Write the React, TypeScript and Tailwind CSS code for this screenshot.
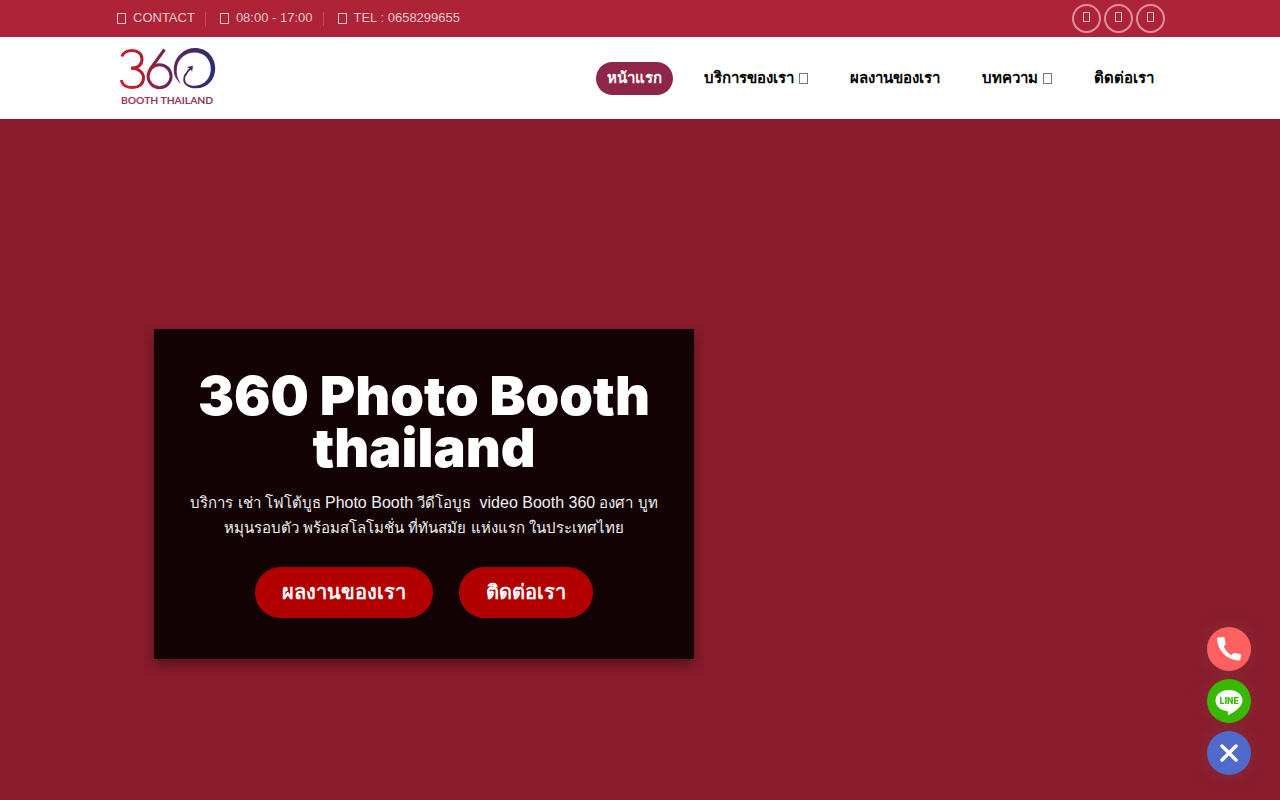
import clsx from 'clsx';

interface NavItem {
  label: string;
  active?: boolean;
  hasMenu?: boolean;
}

const navItems: NavItem[] = [
  { label: 'หน้าแรก', active: true },
  { label: 'บริการของเรา', hasMenu: true },
  { label: 'ผลงานของเรา' },
  { label: 'บทความ', hasMenu: true },
  { label: 'ติดต่อเรา' },
];

const contacts = ['CONTACT', '08:00 - 17:00', 'TEL : 0658299655'];
const socials = ['Facebook', 'Instagram', 'Email'];

function GlyphBox({ className }: { className?: string }) {
  return <span aria-hidden="true" className={clsx('inline-block shrink-0 border', className)} />;
}

function Logo() {
  return (
    <svg width="96" height="60" viewBox="0 0 96 60" role="img" aria-label="360 Booth Thailand">
      <defs>
        <linearGradient id="logo" gradientUnits="userSpaceOnUse" x1="0" y1="0" x2="96" y2="0">
          <stop offset="0" stopColor="#d11f2a" />
          <stop offset="0.2" stopColor="#b3202f" />
          <stop offset="0.5" stopColor="#66265a" />
          <stop offset="1" stopColor="#272e72" />
        </linearGradient>
        <linearGradient id="logoText" gradientUnits="userSpaceOnUse" x1="0" y1="0" x2="96" y2="0">
          <stop offset="0" stopColor="#9c3550" />
          <stop offset="1" stopColor="#86375c" />
        </linearGradient>
      </defs>
      <g fill="none" stroke="url(#logo)" strokeWidth="3">
        <path d="M1.800 8.500C3.500 4.500 7 2.500 12 2.500C18 2.500 22 6 22 11C22 16.500 18.500 20 11 20.200C19 20.200 23.500 24.500 23.500 30C23.500 36 18.500 39.600 12.500 39.600C6 39.600 2.200 36.500 1.200 32" />
        <path d="M44.500 1.500L30 21.500" />
        <circle cx="39.600" cy="28.200" r="11.500" />
        <path d="M65.500 27C67 24 68.500 22 71.500 19.500M65.500 26C62 34 65.500 38.500 75 39" strokeWidth="1.800" />
      </g>
      <path
        fill="url(#logo)"
        d="M61 35.500C55 31.500 53 25 54 18C56 7 65 0 75 0C87 0 95.200 9 95.200 20.500C95.200 32 87 40.800 75 40.300C70 40.300 66 38 64 34C67 37.500 71 38.300 75 37.800C84.500 37.300 90.800 30 90.800 21C90.800 11 84 4.500 74.500 4.500C66 4.500 58.500 10 57 19C56 26 57.500 31 61 35.500Z"
      />
      <path fill="#4a2960" d="M67 19L73 17.700L72.100 23.700L70.500 21.100Z" />
      <text x="1" y="56" fill="url(#logoText)" fontFamily="Lato, sans-serif" fontWeight="700" fontSize="10.300">
        BOOTH THAILAND
      </text>
    </svg>
  );
}

function TopBar() {
  return (
    <div className="bg-[#ae2337] text-[#ecc9ce]">
      <div className="mx-auto flex h-[37px] max-w-[1080px] items-center justify-between px-[15px]">
        <ul className="flex items-center text-[13px] leading-4">
          {contacts.map((item, i) => (
            <li key={item} className="flex items-center">
              {i > 0 && <span className="mx-[10px] h-[14px] w-px bg-white/20" />}
              <a href="#contact" className={clsx('flex items-center gap-[7px]', i === 0 ? 'pl-[2px]' : 'pl-1')}>
                <GlyphBox className="h-[11px] w-[9px] border-[#ecc9ce]" />
                <span className="pb-[2px]">{item}</span>
              </a>
            </li>
          ))}
        </ul>
        <div className="flex gap-[3px]">
          {socials.map(name => (
            <a
              key={name}
              href="#social"
              aria-label={name}
              className="flex size-[29px] items-center justify-center rounded-full border-2 border-[#db919c] pb-[3px]"
            >
              <GlyphBox className="h-[10px] w-[7px] border-[#ecc9ce]" />
            </a>
          ))}
        </div>
      </div>
    </div>
  );
}

function Header() {
  return (
    <header className="bg-white">
      <div className="mx-auto flex h-[82px] max-w-[1080px] items-center justify-between px-[15px]">
        <a href="#home" className="pl-[5px]">
          <Logo />
        </a>
        <nav>
          <ul className="flex items-center gap-5 text-[15px] font-bold text-black">
            {navItems.map(({ label, active, hasMenu }) => (
              <li key={label}>
                <a
                  href="#menu"
                  className={clsx(
                    'flex h-[33px] items-center gap-[5px] rounded-full px-[11px]',
                    active && 'bg-[#8f2649] text-white'
                  )}
                >
                  {label}
                  {hasMenu && <GlyphBox className="h-[11px] w-[9px] border-[#777]" />}
                </a>
              </li>
            ))}
          </ul>
        </nav>
      </div>
    </header>
  );
}

function Hero() {
  const buttonClass =
    'flex h-[51px] items-center rounded-full bg-[#b20000] px-[27px] text-xl font-bold text-white';

  return (
    <main className="flex flex-1 flex-col justify-center pt-[68px]">
      <div className="mx-auto w-full max-w-[1080px] px-[54px]">
        <section className="max-w-[540px] bg-[#140304] px-[30px] pt-[41px] pb-[41px] text-center shadow-[0_6px_12px_rgba(0,0,0,0.35)]">
          <h1 className="font-['Arial_Black','Inter',sans-serif] text-[54px] leading-[52px] font-black text-white">
            360 Photo Booth thailand
          </h1>
          <p className="mt-4 text-[15px] leading-[25px] font-medium text-[#f1f1f1]">
            บริการ เช่า โฟโต้บูธ <span className="text-base leading-none">Photo Booth</span> วีดีโอบูธ&nbsp;{' '}
            <span className="text-base leading-none">video Booth 360</span> องศา บูทหมุนรอบตัว พร้อมสโลโมชั่น
            ที่ทันสมัย แห่งแรก ในประเทศไทย
          </p>
          <div className="mt-[27px] flex justify-center gap-[26px]">
            <a href="#portfolio" className={buttonClass}>
              ผลงานของเรา
            </a>
            <a href="#contact" className={buttonClass}>
              ติดต่อเรา
            </a>
          </div>
        </section>
      </div>
    </main>
  );
}

function ChatWidget() {
  const circle = 'flex size-11 items-center justify-center rounded-full shadow-[0_0_20px_rgba(120,120,120,0.2)]';

  return (
    <div className="fixed right-[29px] bottom-[25px] flex flex-col gap-2">
      <a href="#phone" aria-label="Phone" className={clsx(circle, 'bg-[#ff6060]')}>
        <svg width="24" height="24" viewBox="0 0 24 24" fill="#fff">
          <path d="M6.500 .1L.9 .6C.4 .6 0 1 0 1.500C.6 13.500 9.500 23 22.300 23.500C22.800 23.500 23.200 23.200 23.300 22.700L24 18C24 17.500 23.700 17.100 23.200 17L17.300 16C17 15.900 16.700 16 16.500 16.200L14.300 18C11 16.200 8.200 13 6.800 9.500L8.500 7.200C8.700 7 8.700 6.700 8.700 6.400L7.500 .8C7.400 .4 7 .1 6.500 .1Z" />
        </svg>
      </a>
      <a href="#line" aria-label="LINE" className={clsx(circle, 'bg-[#38b900]')}>
        <svg width="28" height="28" viewBox="0 -3 28 28">
          <path
            fill="#fff"
            d="M14 0C6.300 0 .5 4.600 .5 10.500C.5 15.800 5 20 11.600 21C13.200 21.300 13.100 22 12.800 24C12.700 24.800 12.900 25.300 13.700 24.900C17 23.300 27.500 17.500 27.500 10.500C27.500 4.600 21.700 0 14 0Z"
          />
          <text x="14" y="14" textAnchor="middle" fill="#38b900" fontFamily="Roboto, sans-serif" fontWeight="900" fontSize="9">
            LINE
          </text>
        </svg>
      </a>
      <button type="button" aria-label="Close" className={clsx(circle, 'bg-[#4f6acb]')}>
        <svg width="18" height="18" viewBox="0 0 18 18" fill="none" stroke="#fff" strokeWidth="3.400" strokeLinecap="round">
          <path d="M2 2L16 16M16 2L2 16" />
        </svg>
      </button>
    </div>
  );
}

export default function App() {
  return (
    <div className="flex min-h-screen flex-col bg-[#8a1c2c] font-['Liberation_Sans',sans-serif]">
      <TopBar />
      <Header />
      <Hero />
      <ChatWidget />
    </div>
  );
}
